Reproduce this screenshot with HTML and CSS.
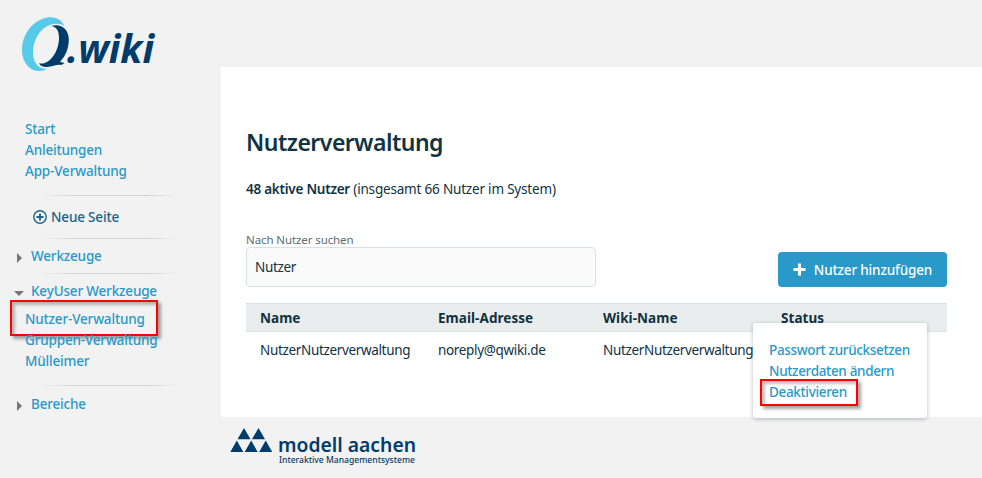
FILE: index.html
```html
<!DOCTYPE html>
<html lang="de">
<head>
<meta charset="utf-8">
<title>Nutzerverwaltung</title>
<link rel="stylesheet" href="styles.css">
</head>
<body>
<div class="page">
  <aside class="sidebar">
    <svg class="logo" width="140" height="64" viewBox="18 12 140 64">
      <path fill="#57caea" d="M64.500 26C60 17 51 15.500 42 19C29 24 21.500 38 22 51C22.500 64 31 71.500 40 71C43 70.800 46 69.700 48 68.500C40 70 33.500 64 33 54C32.500 42 39 28 51 24.500C56 23.200 61 24 64.500 26Z"/>
      <path fill="#003c6b" d="M51 26C61 23 68.500 29 68.800 39C69 49 65 56.500 60 61.800L64.500 63L61.500 65C57 64 53 66.500 47 67C43 67.300 40.500 66 39 63.200C49 66 59 52 59 38C59 30 56 26.500 51 26Z"/>
      <text class="logo-text" x="67" y="63" textLength="87" lengthAdjust="spacingAndGlyphs">.wiki</text>
    </svg>
    <nav class="nav">
      <ul class="links">
        <li><a>Start</a></li>
        <li><a>Anleitungen</a></li>
        <li><a>App-Verwaltung</a></li>
      </ul>
      <hr class="rule">
      <div class="new-page">
        <svg width="14" height="14" viewBox="0 0 14 14" fill="none" stroke="#19658a" stroke-width="1.400"><circle cx="7" cy="7" r="6.200"/><path stroke-width="1.800" d="M7 3.500v7M3.500 7h7"/></svg>
        <span>Neue Seite</span>
      </div>
      <hr class="rule">
      <div class="section tools"><i class="arrow right"></i><a>Werkzeuge</a></div>
      <hr class="rule">
      <div class="section key"><i class="arrow down"></i><a>KeyUser Werkzeuge</a></div>
      <ul class="links sub">
        <li class="current"><a>Nutzer-Verwaltung</a><span class="mark mark-nav"></span></li>
        <li><a>Gruppen-Verwaltung</a></li>
        <li><a>Mülleimer</a></li>
      </ul>
      <hr class="rule">
      <div class="section areas"><i class="arrow right"></i><a>Bereiche</a></div>
    </nav>
  </aside>
  <div class="column">
    <main class="content">
      <h1>Nutzerverwaltung</h1>
      <p class="summary"><b>48 aktive Nutzer</b> <span>(insgesamt 66 Nutzer im System)</span></p>
      <div class="toolbar">
        <label class="search"><span class="caption">Nach Nutzer suchen</span><input type="text" value="Nutzer"></label>
        <button class="add"><svg width="13" height="13" viewBox="0 0 13 13"><path d="M6.500 0.500v12M0.500 6.500h12" stroke="#fff" stroke-width="3"/></svg><span>Nutzer hinzufügen</span></button>
      </div>
      <div class="table">
        <div class="row head"><b>Name</b><b>Email-Adresse</b><b>Wiki-Name</b><b>Status</b></div>
        <div class="row"><span>NutzerNutzerverwaltung</span><span>noreply@qwiki.de</span><span>NutzerNutzerverwaltung</span><span></span></div>
        <div class="menu">
          <a>Passwort zurücksetzen</a>
          <a>Nutzerdaten ändern</a>
          <a class="last">Deaktivieren<span class="mark mark-menu"></span></a>
        </div>
      </div>
    </main>
    <footer class="footer">
      <svg width="200" height="44" viewBox="228 426 200 44">
        <path fill="#003c6b" d="M244 428l6.500 11.200h-13zM258.500 428l6.500 11.200h-13zM236.800 440.500l6.500 11.500h-13zM251.200 440.500l6.500 11.500h-13zM265.700 440.500l6.500 11.500h-13z"/>
        <text class="brand" x="278" y="451.500" textLength="138" lengthAdjust="spacingAndGlyphs">modell aachen</text>
        <text class="claim" x="279" y="463" textLength="136" lengthAdjust="spacingAndGlyphs">Interaktive Managementsysteme</text>
      </svg>
    </footer>
  </div>
</div>
</body>
</html>
```
FILE: styles.css
```css
* { box-sizing: border-box; }
body { margin: 0; background: #f2f2f2; font: 13.5px/21px "Noto Sans", sans-serif; letter-spacing: -.34px; color: #11323f; overflow: hidden; }
.page { display: grid; grid-template-columns: 221px 1fr; height: 478px; }
.sidebar { padding: 12px 0 0 10px; }
.logo { display: block; margin-left: 8px; letter-spacing: 0; }
.logo-text { font: italic 700 38.5px "Noto Sans", sans-serif; fill: #003c6b; }
.nav { margin-top: 43px; font-weight: 500; letter-spacing: -.17px; }
.nav a, .menu a { color: #2899c9; }
.links { list-style: none; margin: 0; padding: 0 0 0 15px; }
.links li { position: relative; height: 21px; }
.rule { height: 1px; margin: 0; border: 0; width: 140px; margin-left: 30px; background: linear-gradient(90deg, transparent, #d0d3d4 25%, #d0d3d4 75%, transparent); }
.links + .rule { margin-top: 13px; }
.new-page { display: flex; align-items: center; gap: 4px; height: 42px; padding-left: 23px; color: #19658a; }
.section { display: flex; align-items: center; }
.tools { height: 34px; padding: 1px 0 0 7px; }
.key { height: 35px; padding-left: 4px; }
.areas { height: 36px; padding-left: 7px; }
.arrow { flex: none; border-style: solid; border-color: transparent; margin-top: 3px; }
.right { border-width: 5px 0 5px 5px; border-left-color: #777; margin-right: 9px; }
.down { border-width: 5px 5px 0; border-top-color: #777; margin-right: 7px; }
.mark { position: absolute; border: 2px solid #f00; box-shadow: 3px 3px 3px rgba(0,0,0,.35), inset 3px 3px 3px rgba(0,0,0,.25); }
.mark-nav { left: -15px; top: -9px; width: 148px; height: 36px; }
.mark-menu { left: -9px; top: -3px; width: 98px; height: 27px; }
.column { padding-top: 67px; }
.content { height: 350px; background: #fff; padding: 61px 35px 0 25px; }
h1 { margin: 0; font-size: 23px; line-height: 28px; font-weight: 600; letter-spacing: -.5px; }
.summary { margin: 23px 0 0; letter-spacing: -.19px; }
.summary b { font-weight: 600; letter-spacing: -.25px; }
.toolbar { display: flex; justify-content: space-between; align-items: flex-end; margin-top: 32px; }
.search { width: 350px; }
.caption { display: block; font-size: 11.5px; line-height: 15px; color: #5b6c74; letter-spacing: -.1px; }
input { display: block; width: 350px; height: 40px; padding: 0 8px; border: 1px solid #dbe1e3; border-radius: 4px; background: #fafafa; color: #11323f; font: 13.5px "Noto Sans", sans-serif; letter-spacing: -.32px; }
.add { display: flex; align-items: center; justify-content: center; gap: 8px; width: 169px; height: 35px; padding: 0; border: 0; border-radius: 4px; background: #2899c9; color: #fff; font: 500 13.5px "Noto Sans", sans-serif; letter-spacing: -.15px; }
.add span { padding-top: 1px; }
.add svg { margin-bottom: 1px; }
.table { position: relative; margin-top: 16px; }
.row { display: grid; grid-template-columns: 178px 165px 178px 1fr; padding-left: 14px; height: 37px; align-items: center; white-space: nowrap; }
.head { height: 29px; padding-top: 2px; background: #e9edee; border: solid #dbe1e3; border-width: 1px 0; letter-spacing: .05px; }
.menu { position: absolute; left: 507px; top: 20px; width: 174px; height: 95px; padding: 17px 16px; background: #fff; border-radius: 3px; box-shadow: 0 1px 4px rgba(0,40,50,.3); font-weight: 500; white-space: nowrap; }
.menu a { display: block; position: relative; }
.footer { padding: 9px 0 0 7px; letter-spacing: 0; }
.footer svg { display: block; }
.brand { font: 600 20.5px "Noto Sans", sans-serif; fill: #003c6b; }
.claim { font: 500 9.5px "Noto Sans", sans-serif; fill: #003c6b; }
```
